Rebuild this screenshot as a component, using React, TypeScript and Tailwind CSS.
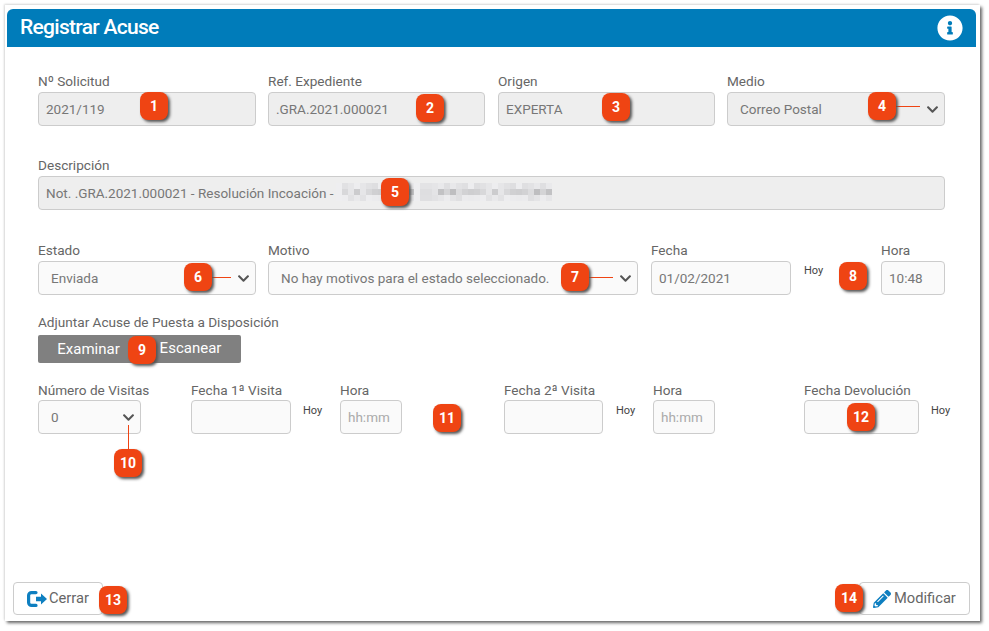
import React from "react";
import { FaInfoCircle, FaPencilAlt, FaChevronDown } from "react-icons/fa";

const Label = ({ children, tight = false }: { children: React.ReactNode; tight?: boolean }) => (
  <label className={`block ${tight ? "h-[20px]" : "h-[21px]"} text-[13.6px] leading-[20px] text-[#666] whitespace-nowrap`}>{children}</label>
);

function Field({ label, value, placeholder, cls, disabled = false, tight = false }: { label: string; value?: string; placeholder?: string; cls: string; disabled?: boolean; tight?: boolean }) {
  return (
    <div className={`shrink-0 ${cls}`}>
      <Label tight={tight}>{label}</Label>
      <input
        readOnly
        value={value ?? ""}
        placeholder={placeholder}
        className={`h-[34px] w-full rounded-[4px] border border-[#ccc] ${disabled ? "bg-[#eee]" : "bg-[#fafafa]"} pl-[7px] text-[13.5px] text-[#777] placeholder:text-[#aaa] outline-none`}
      />
    </div>
  );
}

function Select({ label, value, cls, disabled = false, tight = false }: { label: string; value: string; cls: string; disabled?: boolean; tight?: boolean }) {
  return (
    <div className={`shrink-0 ${cls}`}>
      <Label tight={tight}>{label}</Label>
      <div className={`flex h-[34px] items-center justify-between rounded-[4px] border border-[#ccc] ${disabled ? "bg-[#eee]" : "bg-[#fafafa]"} pl-[12px] pr-[5px] text-[13.5px] text-[#777]`}>
        <span className="whitespace-nowrap">{value}</span>
        <FaChevronDown className="h-[13px] w-[13px] text-[#555]" />
      </div>
    </div>
  );
}

const Hoy = ({ cls }: { cls: string }) => (
  <span className={`shrink-0 text-[11px] leading-[14px] font-normal text-[#444] ${cls}`}>Hoy</span>
);

const badges: { n: number; x: number; y: number }[] = [
  { n: 1, x: 140, y: 92 },
  { n: 2, x: 416, y: 94 },
  { n: 3, x: 602, y: 93 },
  { n: 4, x: 868, y: 92 },
  { n: 5, x: 381, y: 178 },
  { n: 6, x: 184, y: 263 },
  { n: 7, x: 561, y: 263 },
  { n: 8, x: 839, y: 262 },
  { n: 9, x: 128, y: 336 },
  { n: 10, x: 114, y: 449 },
  { n: 11, x: 433, y: 404 },
  { n: 12, x: 847, y: 403 },
  { n: 13, x: 99, y: 586 },
  { n: 14, x: 835, y: 584 },
];

const lines: { x: number; y: number; w: number; h: number }[] = [
  { x: 896, y: 106, w: 24, h: 1 },
  { x: 212, y: 277, w: 19, h: 1 },
  { x: 589, y: 277, w: 24, h: 1 },
  { x: 128, y: 425, w: 1, h: 25 },
];

const mosaic = Array.from({ length: 36 * 3 }, (_, i) => {
  const col = i % 36;
  const row = Math.floor(i / 36);
  const seed = (col * 37 + row * 101 + col * col * 13) % 23;
  const shade = row === 1 ? 190 + seed * 2 : 222 + seed * 0.7;
  const gap = col < 1 || col === 13;
  const v = gap ? 238 : Math.min(238, Math.round(shade));
  return { col, row, fill: `rgb(${v},${v},${v + 2})` };
});

export default function App() {
  return (
    <div className="relative h-[631px] w-[989px] overflow-hidden bg-white font-['Roboto',sans-serif]">
      <div className="ml-[5px] mt-[5px] flex h-[616px] w-[975px] flex-col bg-white pl-[2px] pr-[4px] pt-[4px] shadow-[2px_2px_3px_#666,-1px_-1px_2px_#ddd]">
        <header className="flex h-[38px] shrink-0 items-center justify-between rounded-t-[6px] bg-[#007cba] pl-[13px] pr-[13px]">
          <h1 className="pb-[1px] text-[21px] font-medium tracking-[-0.7px] text-white">Registrar Acuse</h1>
          <FaInfoCircle className="h-[26px] w-[26px] text-white" />
        </header>

        <main className="flex flex-1 flex-col pl-[31px] pr-[31px] pt-[24px]">
          <div className="flex">
            <Field label="Nº Solicitud" value="2021/119" cls="w-[218px]" disabled />
            <Field label="Ref. Expediente" value=".GRA.2021.000021" cls="ml-[12px] w-[217px]" disabled />
            <Field label="Origen" value="EXPERTA" cls="ml-[13px] w-[217px]" disabled />
            <Select label="Medio" value="Correo Postal" cls="ml-[12px] w-[218px]" disabled />
          </div>

          <div className="mt-[29px] w-[907px]">
            <Field label="Descripción" value="Not. .GRA.2021.000021 - Resolución Incoación -" cls="w-full" disabled />
          </div>

          <div className="mt-[30px] flex">
            <Select label="Estado" value="Enviada" cls="w-[218px]" />
            <Select label="Motivo" value="No hay motivos para el estado seleccionado." cls="ml-[12px] w-[370px]" />
            <Field label="Fecha" value="01/02/2021" cls="ml-[13px] w-[140px]" />
            <Hoy cls="ml-[13px] mt-[24px] w-[77px]" />
            <Field label="Hora" value="10:48" cls="w-[64px]" />
          </div>

          <div className="mt-[17px]">
            <Label>Adjuntar Acuse de Puesta a Disposición</Label>
            <div className="mt-[2px] flex h-[28px] w-[203px] overflow-hidden rounded-[2px] bg-[#808080] text-[15px] text-white">
              <button className="w-[101px] text-center">Examinar</button>
              <button className="w-[102px] pb-[1px] pl-[1px] text-center">Escanear</button>
            </div>
          </div>

          <div className="mt-[17px] flex">
            <Select tight label="Número de Visitas" value="0" cls="w-[103px]" />
            <Field tight label="Fecha 1ª Visita" cls="ml-[50px] w-[100px]" />
            <Hoy cls="ml-[12px] mt-[24px] w-[37px]" />
            <Field tight label="Hora" placeholder="hh:mm" cls="w-[62px]" />
            <Field tight label="Fecha 2ª Visita" cls="ml-[102px] w-[99px]" />
            <Hoy cls="ml-[13px] mt-[24px] w-[37px]" />
            <Field tight label="Hora" placeholder="hh:mm" cls="w-[62px]" />
            <Field tight label="Fecha Devolución" cls="ml-[89px] w-[115px]" />
            <Hoy cls="ml-[12px] mt-[24px]" />
          </div>
        </main>

        <footer className="flex justify-between pb-[6px] pl-[6px] pr-[6px]">
          <button className="flex h-[33px] w-[90px] items-center rounded-[4px] border border-[#ccc] bg-white pl-[13px] text-[14.7px] text-[#666]">
            <svg viewBox="0 0 20 16" className="mr-[2px] h-[16px] w-[20px]">
              <path d="M9 1.6H4.5A2.9 2.9 0 0 0 1.6 4.5v7a2.9 2.9 0 0 0 2.9 2.9H9" fill="none" stroke="#0e7fc0" strokeWidth="3.2" strokeLinecap="round" />
              <path d="M9 5.8h5V2.6l6 5.4-6 5.4v-3.2H9z" fill="#0e7fc0" />
            </svg>
            Cerrar
          </button>
          <button className="flex h-[33px] w-[111px] items-center rounded-[4px] border border-[#ccc] bg-white pl-[13px] text-[14.7px] text-[#666]">
            <FaPencilAlt className="mr-[3px] h-[18px] w-[18px] text-[#0e7fc0]" />
            Modificar
          </button>
        </footer>
      </div>

      <svg viewBox="0 0 216 18" className="absolute left-[336px] top-[183px] h-[18px] w-[216px] blur-[0.7px]" aria-hidden="true">
        {mosaic.map((m) => (
          <rect key={`${m.col}-${m.row}`} x={m.col * 6} y={m.row * 6} width="6" height="6" fill={m.fill} />
        ))}
      </svg>

      {lines.map((l, i) => (
        <div key={i} className="absolute bg-[#ef4413]" style={{ left: l.x, top: l.y, width: l.w, height: l.h }} />
      ))}

      {badges.map((b) => (
        <div
          key={b.n}
          className="absolute flex h-[28px] w-[28px] items-center justify-center rounded-[8px] bg-[#ef4413] text-[14px] font-bold text-white shadow-[2px_2px_3px_#555]"
          style={{ left: b.x, top: b.y }}
        >
          {b.n}
        </div>
      ))}
    </div>
  );
}
